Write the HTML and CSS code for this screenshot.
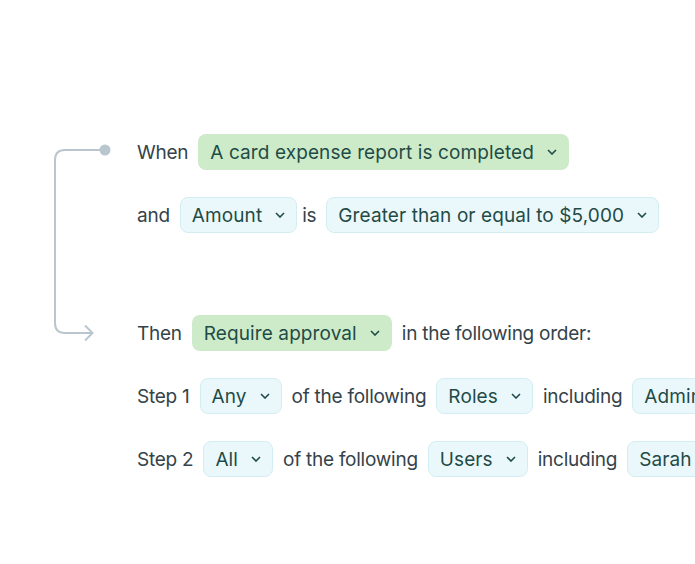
FILE: index.html
```html
<!DOCTYPE html>
<html>
<head>
<meta charset="utf-8">
<link rel="stylesheet" href="styles.css">
</head>
<body>
<div class="wrap">
  <svg class="connector" width="92" height="220" viewBox="0 0 92 220">
    <path d="M60 16 H20 Q10 16 10 26 V189 Q10 199 20 199 H47" fill="none" stroke="#b9c6cd" stroke-width="2"/>
    <path d="M40 191.5 L47.5 199 L40 206.5" fill="none" stroke="#b9c6cd" stroke-width="2"/>
    <circle cx="60" cy="16" r="5.5" fill="#b9c6cd"/>
  </svg>
  <div class="rules">
    <div class="row">
      <span class="label">When</span>
      <span class="pill green">A card expense report is completed<svg class="chev" width="10" height="6" viewBox="0 0 10 6"><path d="M1 1 L5 5 L9 1" fill="none" stroke="currentColor" stroke-width="1.6"/></svg></span>
    </div>
    <div class="row">
      <span class="label">and</span>
      <span class="pill blue">Amount<svg class="chev" width="10" height="6" viewBox="0 0 10 6"><path d="M1 1 L5 5 L9 1" fill="none" stroke="currentColor" stroke-width="1.6"/></svg></span>
      <span class="label is">is</span>
      <span class="pill blue">Greater than or equal to $5,000<svg class="chev" width="10" height="6" viewBox="0 0 10 6"><path d="M1 1 L5 5 L9 1" fill="none" stroke="currentColor" stroke-width="1.6"/></svg></span>
    </div>
    <div class="row then">
      <span class="label">Then</span>
      <span class="pill green">Require approval<svg class="chev" width="10" height="6" viewBox="0 0 10 6"><path d="M1 1 L5 5 L9 1" fill="none" stroke="currentColor" stroke-width="1.6"/></svg></span>
      <span class="label">in the following order:</span>
    </div>
    <div class="row">
      <span class="label">Step 1</span>
      <span class="pill blue">Any<svg class="chev" width="10" height="6" viewBox="0 0 10 6"><path d="M1 1 L5 5 L9 1" fill="none" stroke="currentColor" stroke-width="1.6"/></svg></span>
      <span class="label">of the following</span>
      <span class="pill blue">Roles<svg class="chev" width="10" height="6" viewBox="0 0 10 6"><path d="M1 1 L5 5 L9 1" fill="none" stroke="currentColor" stroke-width="1.6"/></svg></span>
      <span class="label">including</span>
      <span class="pill blue">Admin<svg class="chev" width="10" height="6" viewBox="0 0 10 6"><path d="M1 1 L5 5 L9 1" fill="none" stroke="currentColor" stroke-width="1.6"/></svg></span>
    </div>
    <div class="row">
      <span class="label">Step 2</span>
      <span class="pill blue">All<svg class="chev" width="10" height="6" viewBox="0 0 10 6"><path d="M1 1 L5 5 L9 1" fill="none" stroke="currentColor" stroke-width="1.6"/></svg></span>
      <span class="label">of the following</span>
      <span class="pill blue">Users<svg class="chev" width="10" height="6" viewBox="0 0 10 6"><path d="M1 1 L5 5 L9 1" fill="none" stroke="currentColor" stroke-width="1.6"/></svg></span>
      <span class="label">including</span>
      <span class="pill blue">Sarah<svg class="chev" width="10" height="6" viewBox="0 0 10 6"><path d="M1 1 L5 5 L9 1" fill="none" stroke="currentColor" stroke-width="1.6"/></svg></span>
    </div>
  </div>
</div>
</body>
</html>
```
FILE: styles.css
```css
html, body {
  margin: 0;
  padding: 0;
  background: #ffffff;
  width: 695px;
  height: 564px;
  overflow: hidden;
}
body {
  font-family: Inter, "Noto Sans", sans-serif;
  font-size: 19px;
  color: #34434a;
}
.wrap {
  display: flex;
  align-items: flex-start;
  padding-top: 134px;
  padding-left: 45px;
}
.connector {
  flex: none;
  display: block;
}
.rules {
  display: flex;
  flex-direction: column;
  gap: 27px;
  white-space: nowrap;
}
.row {
  display: flex;
  align-items: center;
  gap: 10px;
  height: 36px;
}
.row.then {
  margin-top: 55px;
}
.label {
  letter-spacing: -0.25px;
}
.is {
  margin-left: -5px;
}
.pill {
  display: inline-flex;
  align-items: center;
  height: 36px;
  box-sizing: border-box;
  padding: 0 12px 0 12px;
  border-radius: 8px;
  color: #1f4b47;
  letter-spacing: 0.1px;
  flex: none;
}
.pill .chev {
  margin-left: 13px;
  display: block;
}
.green {
  background: #cdebc8;
}
.blue {
  background: #ebf8fb;
  border: 1px solid #d2eef3;
  padding: 0 11px;
}
```
